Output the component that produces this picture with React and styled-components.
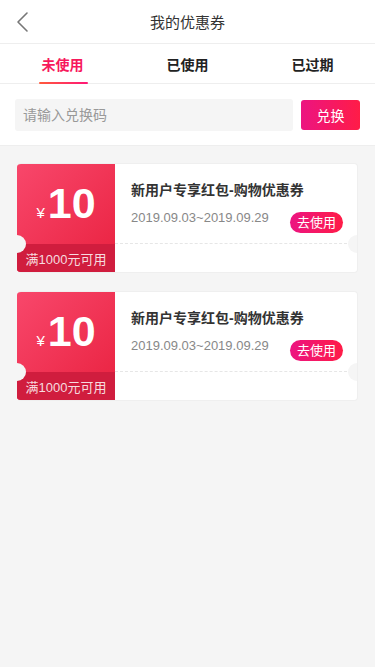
import styled, { createGlobalStyle } from "styled-components";

const GlobalStyle = createGlobalStyle`
  html, body {
    margin: 0;
    padding: 0;
    background: #f5f5f5;
    font-family: "Liberation Sans", "Noto Sans CJK SC", sans-serif;
  }
  * { box-sizing: border-box; }
`;

const coupons = [
  { id: 1, amount: 10, limit: "满1000元可用", title: "新用户专享红包-购物优惠券", date: "2019.09.03~2019.09.29" },
  { id: 2, amount: 10, limit: "满1000元可用", title: "新用户专享红包-购物优惠券", date: "2019.09.03~2019.09.29" },
];

const tabs = ["未使用", "已使用", "已过期"];

export default function App() {
  return (
    <Page>
      <GlobalStyle />
      <Header>
        <BackButton>
          <svg width="14" height="22" viewBox="0 0 14 22" fill="none">
            <polyline points="11,2 2,11 11,20" stroke="#777" strokeWidth="1.6" strokeLinecap="round" strokeLinejoin="round" />
          </svg>
        </BackButton>
        <Title>我的优惠券</Title>
      </Header>
      <Tabs>
        {tabs.map((t, i) => (
          <Tab key={t} $active={i === 0}>{t}</Tab>
        ))}
      </Tabs>
      <Exchange>
        <CodeInput placeholder="请输入兑换码" />
        <ExchangeButton>兑换</ExchangeButton>
      </Exchange>
      <List>
        {coupons.map((c) => (
          <Coupon key={c.id}>
            <Left>
              <Amount>
                <Yen>¥</Yen>
                <Num>{c.amount}</Num>
              </Amount>
              <Limit>{c.limit}</Limit>
            </Left>
            <Right>
              <Info>
                <CouponTitle>{c.title}</CouponTitle>
                <Row>
                  <DateText>{c.date}</DateText>
                  <UseButton>去使用</UseButton>
                </Row>
              </Info>
              <Bottom />
            </Right>
            <Notch $side="left" />
            <Notch $side="right" />
          </Coupon>
        ))}
      </List>
    </Page>
  );
}

const Page = styled.div`
  min-height: 667px;
  background: #f5f5f5;
`;

const Header = styled.div`
  position: relative;
  height: 44px;
  background: #fff;
  border-bottom: 1px solid #eee;
  display: flex;
  align-items: center;
  justify-content: center;
`;

const BackButton = styled.div`
  position: absolute;
  left: 16px;
  top: 11px;
  display: flex;
`;

const Title = styled.div`
  font-size: 15px;
  color: #333;
`;

const Tabs = styled.div`
  display: grid;
  grid-template-columns: repeat(3, 1fr);
  height: 40px;
  background: #fff;
  border-bottom: 1px solid #eee;
`;

const Tab = styled.div`
  position: relative;
  display: flex;
  align-items: center;
  justify-content: center;
  font-size: 14px;
  font-weight: bold;
  color: ${(p) => (p.$active ? "#f7195c" : "#222")};
  &::after {
    content: "";
    display: ${(p) => (p.$active ? "block" : "none")};
    position: absolute;
    bottom: -1px;
    left: 50%;
    width: 49px;
    margin-left: -24px;
    height: 2px;
    border-radius: 1px;
    background: linear-gradient(90deg, #ff5a3c, #ff1777);
  }
`;

const Exchange = styled.div`
  display: flex;
  align-items: center;
  gap: 8px;
  padding: 15px 15px 14px;
  background: #fff;
  border-bottom: 1px solid #eee;
`;

const CodeInput = styled.input`
  flex: 1;
  min-width: 0;
  height: 32px;
  border: none;
  outline: none;
  border-radius: 3px;
  background: #f5f5f5;
  padding: 0 8px;
  font-family: inherit;
  font-size: 14px;
  color: #333;
  &::placeholder { color: #999; }
`;

const ExchangeButton = styled.button`
  width: 59px;
  height: 30px;
  border: none;
  border-radius: 3px;
  background: linear-gradient(90deg, #ec1481, #ff1c47);
  color: #fff;
  font-family: inherit;
  font-size: 14px;
  padding: 0;
`;

const List = styled.div`
  display: flex;
  flex-direction: column;
  gap: 18px;
  padding: 17px 17px;
`;

const Coupon = styled.div`
  position: relative;
  display: flex;
  height: 110px;
  border-radius: 4px;
  overflow: hidden;
  background: #fff;
  border: 1px solid #efefef;
  border-left: none;
`;

const Left = styled.div`
  width: 98px;
  display: flex;
  flex-direction: column;
  background: linear-gradient(135deg, #f8476b, #e9213f);
  color: #fff;
`;

const Amount = styled.div`
  height: 80px;
  display: flex;
  align-items: baseline;
  justify-content: center;
  padding-top: 15px;
`;

const Yen = styled.span`
  font-size: 15px;
  margin-right: 3px;
`;

const Num = styled.span`
  font-size: 43px;
  font-weight: bold;
  line-height: 48px;
`;

const Limit = styled.div`
  flex: 1;
  display: flex;
  align-items: center;
  justify-content: center;
  background: #d01d3e;
  color: rgba(255, 255, 255, 0.85);
  font-size: 13px;
`;

const Right = styled.div`
  flex: 1;
  display: flex;
  flex-direction: column;
`;

const Info = styled.div`
  height: 79px;
  padding: 18px 14px 0 16px;
`;

const CouponTitle = styled.div`
  font-size: 14px;
  font-weight: bold;
  color: #333;
  line-height: 16px;
`;

const Row = styled.div`
  display: flex;
  justify-content: space-between;
  align-items: flex-start;
  margin-top: 11px;
`;

const DateText = styled.div`
  font-size: 13px;
  color: #888;
  line-height: 18px;
`;

const UseButton = styled.div`
  margin-top: 3px;
  height: 21px;
  padding: 0 7px;
  border-radius: 11px;
  background: linear-gradient(90deg, #ec1481, #ff1c47);
  color: #fff;
  font-size: 13px;
  line-height: 21px;
`;

const Bottom = styled.div`
  flex: 1;
  border-top: 1px dashed #e6e6e6;
`;

const Notch = styled.div`
  position: absolute;
  top: 71px;
  ${(p) => (p.$side === "left" ? "left: -9px;" : "right: -9px;")}
  width: 18px;
  height: 18px;
  border-radius: 50%;
  background: #f5f5f5;
`;
